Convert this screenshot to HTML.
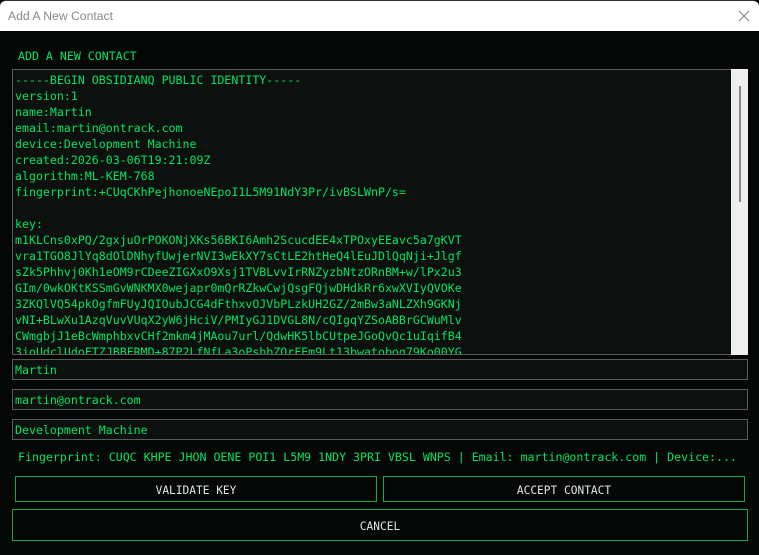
<!DOCTYPE html>
<html><head><meta charset="utf-8"><style>
*{margin:0;padding:0;box-sizing:border-box}
body{width:759px;height:555px;background:#050707;position:relative;overflow:hidden;font-family:"DejaVu Sans Mono","Liberation Mono",monospace;font-size:11.6px;color:#00e35f}
.tb{position:absolute;left:0;top:0;width:759px;height:31px;background:#fff;border-top:1px solid #333;border-radius:6px 6px 0 0}
.tb span{position:absolute;left:8px;top:8px;font-family:"Liberation Sans","DejaVu Sans",sans-serif;font-size:12.2px;color:#888}
.x{position:absolute;left:738px;top:9px}
.abs{position:absolute;white-space:pre}
.ta{position:absolute;left:12px;top:69px;width:720px;height:286px;background:#0c1110;border:1px solid #5a5a5a;overflow:hidden}
.ta div{position:absolute;left:2px;top:2px;line-height:16px;white-space:pre}
.sb{position:absolute;left:731px;top:69px;width:17px;height:286px;background:#efefef}
.th{position:absolute;left:739px;top:86px;width:2px;height:116px;background:#888}
.in{position:absolute;left:12px;width:736px;height:21px;background:#0c1110;border:1px solid #5a5a5a;padding-left:2px;line-height:21px}
.btn{position:absolute;border:1px solid #18a84c;color:#dfe8e2;text-align:center;font-size:11.2px}
</style></head><body>
<div class="tb"><span>Add A New Contact</span>
<svg class="x" width="12" height="12" viewBox="0 0 12 12"><path d="M1 1L11 11M11 1L1 11" stroke="#888" stroke-width="1"/></svg></div>
<div class="abs" style="left:18px;top:49px">ADD A NEW CONTACT</div>
<div class="ta"><div>-----BEGIN OBSIDIANQ PUBLIC IDENTITY-----
version:1
name:Martin
email:martin@ontrack.com
device:Development Machine
created:2026-03-06T19:21:09Z
algorithm:ML-KEM-768
fingerprint:+CUqCKhPejhonoeNEpoI1L5M91NdY3Pr/ivBSLWnP/s=

key:
m1KLCns0xPQ/2gxjuOrPOKONjXKs56BKI6Amh2ScucdEE4xTPOxyEEavc5a7gKVT
vra1TGO8JlYq8dOlDNhyfUwjerNVI3wEkXY7sCtLE2htHeQ4lEuJDlQqNji+Jlgf
sZk5Phhvj0Kh1eOM9rCDeeZIGXxO9Xsj1TVBLvvIrRNZyzbNtzORnBM+w/lPx2u3
GIm/0wkOKtKSSmGvWNKMX0wejapr0mQrRZkwCwjQsgFQjwDHdkRr6xwXVIyQVOKe
3ZKQlVQ54pkOgfmFUyJQIOubJCG4dFthxvOJVbPLzkUH2GZ/2mBw3aNLZXh9GKNj
vNI+BLwXu1AzqVuvVUqX2yW6jHciV/PMIyGJ1DVGL8N/cQIgqYZSoABBrGCWuMlv
CWmgbjJ1eBcWmphbxvCHf2mkm4jMAou7url/QdwHK5lbCUtpeJGoQvQc1uIqifB4
3joUdclUdoFTZJBBFRMD+87P2LfNfLa3oPsbbZOrFEm9Lt13bwatobog79Ko00YG</div></div>
<div class="sb"></div><div class="th"></div>
<div class="in" style="top:359px">Martin</div>
<div class="in" style="top:389px">martin@ontrack.com</div>
<div class="in" style="top:419px">Development Machine</div>
<div class="abs" style="left:18px;top:450px">Fingerprint: CUQC KHPE JHON OENE POI1 L5M9 1NDY 3PRI VBSL WNPS | Email: martin@ontrack.com | Device:...</div>
<div class="btn" style="left:15px;top:476px;width:362px;height:26px;line-height:27px">VALIDATE KEY</div>
<div class="btn" style="left:383px;top:476px;width:362px;height:26px;line-height:27px">ACCEPT CONTACT</div>
<div class="btn" style="left:12px;top:509px;width:736px;height:32px;line-height:33px">CANCEL</div>
</body></html>
